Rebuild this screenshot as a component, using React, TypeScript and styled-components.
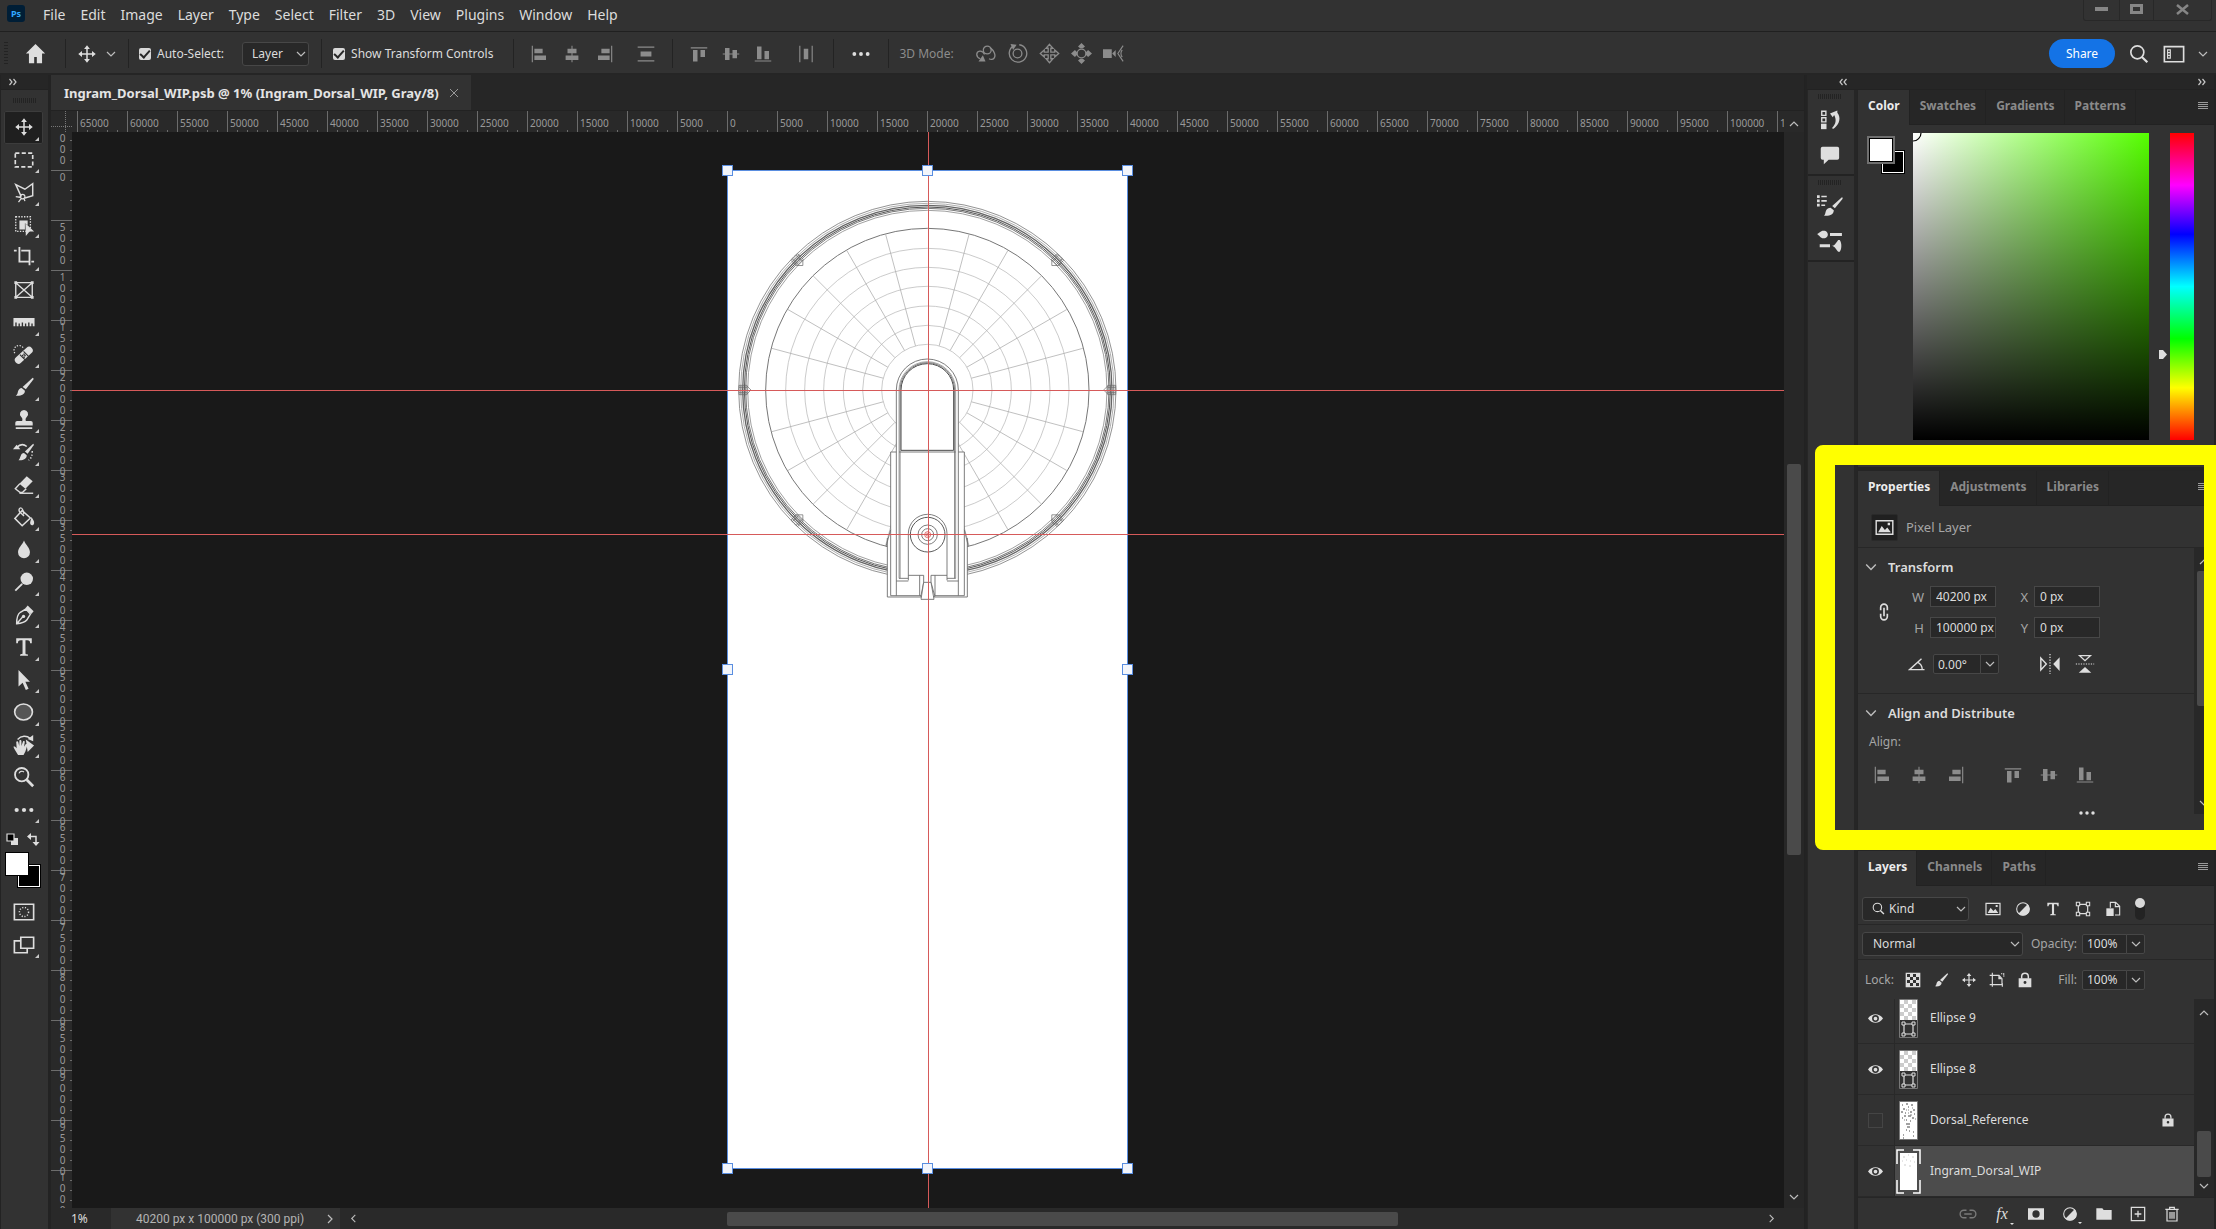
import React, { ReactNode } from "react";
import styled, { createGlobalStyle, css } from "styled-components";

const c = {
  bar: "#323232",
  dark: "#262626",
  line: "#252525",
  ruler: "#292929",
  field: "#282828",
  edge: "#474747",
  text: "#dcdcdc",
  dim: "#a6a6a6",
  off: "#8c8c8c",
  canvas: "#191919",
};

const sans = '"Noto Sans", "Open Sans", sans-serif';

const Global = createGlobalStyle`
  * { box-sizing: border-box; }
  body { margin: 0; overflow: hidden; background: ${c.dark}; color: ${c.text}; font: 13px/18px ${sans}; }
  button, input, select { font: inherit; color: inherit; margin: 0; }
  button { border: 0; padding: 0; background: none; display: flex; align-items: center; justify-content: center; }
  ul { margin: 0; padding: 0; list-style: none; }
  svg { display: block; flex: none; }
`;

/* ---------- icons ---------- */

const S = (p: { d: string; w?: number; dash?: string; fill?: string }) => (
  <path d={p.d} fill={p.fill ?? "none"} stroke="currentColor" strokeWidth={p.w ?? 1.6} strokeDasharray={p.dash} />
);
const F = (p: { d: string }) => <path d={p.d} fill="currentColor" fillRule="evenodd" />;

const art: Record<string, ReactNode> = {
  move: <><S d="M12 4v16M4 12h16" w={1.8} /><F d="M12 1.500l3.500 4.500h-7zM12 22.500l3.500-4.500h-7zM1.500 12L6 8.500v7zM22.500 12L18 8.500v7z" /></>,
  marquee: <S d="M2.500 4.500h19v15h-19z" dash="4.500 2.500" w={1.8} />,
  lasso: <><S d="M9 17L3 4l10 5 8.500-6v13L13 18.500" w={1.6} /><S d="M8 17a2.500 2.500 0 1 0 5 0a2.500 2.500 0 1 0-5 0M3 17l6 1M12 19l1 3M9 19l-3 4" w={1.4} /></>,
  object: <><S d="M3 3h16v16H3z" dash="1.500 1.500" w={1.4} /><F d="M7 7h9v5l-3-2v7H7z" /><F d="M13.500 10l9.500 9h-5l-4 5z" /></>,
  crop: <><S d="M7 1v16h10M1 5h3M9 5h9v16M20 17h3" w={2} /></>,
  frame: <><S d="M3 4h18v16H3zM3 4l18 16M21 4L3 20" w={1.5} /><F d="M1.500 2.500h3v3h-3zM19.500 2.500h3v3h-3zM1.500 18.500h3v3h-3zM19.500 18.500h3v3h-3z" /></>,
  measure: <F d="M.5 7.500h23v9h-2v-3h-1.500v3h-2v-4h-1.500v4h-2v-3H13v3h-2v-4H9.500v4h-2v-3H6v3H4v-4H2.500v4h-2z" />,
  heal: <><path d="M6 17.500L17.500 7" stroke="currentColor" strokeWidth="8" strokeLinecap="round" /><path d="M7.500 11.500l6 6M11.500 8l6 6" stroke="#323232" strokeWidth="1.200" /><path d="M10.500 12.500h.1M13 12.500h.1M12 14.500h.1M12 11h.1" stroke="#323232" strokeWidth="1.500" strokeLinecap="square" /><S d="M2 10a5 5 0 0 1 9-6" dash="1.500 1.500" w={1.3} /></>,
  brush: <><F d="M21.500 2c1 .3 1 1 .7 1.800L14 14.500 10.500 12z" /><F d="M9.500 13l3.500 3c0 4-4 6-10 5.500 2-1.500 2-3 2.500-5 .7-2 2-3.500 4-3.500z" /></>,
  stamp: <F d="M12 1a4.500 4.500 0 0 1 3 7.800c-1.500 1.400-1.500 2.700-1 4.200h5.500a2 2 0 0 1 2 2v3h-19v-3a2 2 0 0 1 2-2H10c.5-1.500.5-2.800-1-4.200A4.500 4.500 0 0 1 12 1zM3 20h18v1.800H3z" />,
  history: <><F d="M22 3c.8.3.8 1 .5 1.600L16 14l-3-2.500z" /><F d="M12 13l3 2.500c0 4-4 6-9 5.500 1.500-1.500 1.500-3 2.500-5 .7-1.800 1.500-3 3.500-3z" /><S d="M4 7c4-4 8-3.500 11-1" w={1.600} /><F d="M0 9l4-5 4 5z" /><S d="M21 11c0 5-1 8-4 10" dash="1.500 2" /></>,
  eraser: <><F d="M15 2.500l6.500 5.500-8 8L7 10.500z" /><S d="M7.500 10.500L2.500 16l5 4h3l4-4" w={1.500} /><S d="M7 21h15" w={1.500} /></>,
  bucket: <><S d="M10 5l9 8-9 8.500L2 13.500z" w={1.600} /><S d="M12 11L7 6c-1-2 0-4 1.500-4S11 4 12 9" w={1.500} /><F d="M20 12c2 3 3.500 4.500 3 7-.4 1.500-1.200 2-2.300 2S18.500 20 18.700 18c.3-2 1-3 1.300-6z" /></>,
  blur: <F d="M12 1.500c2 5 6.500 8 6.500 13a6.500 6.500 0 0 1-13 0c0-5 4.500-8 6.500-13z" />,
  dodge: <><circle cx="15" cy="8.500" r="6.800" fill="currentColor" /><S d="M10 14l-7.500 7.500" w={2} /></>,
  pen: <><S d="M4 21.500c0-6 1-10.500 4-12.500l6-3.500L19 11l-4 6.500c-2 2.500-6 3.500-11 4zM4 21.500l7-8" w={1.600} /><F d="M13.500 4.500L16 1.500l6.500 6.500-2.500 3z" /><circle cx="11.500" cy="13.500" r="1.800" fill="currentColor" /></>,
  type: <F d="M3.500 2.500h17v5.500h-1.800c-.2-2.500-.7-3.300-3.200-3.300h-1.900v14.100c0 1 .6 1.200 2.700 1.300V21.500H7.700v-1.400c2.100-.1 2.700-.3 2.700-1.300V4.700H8.500C6 4.700 5.500 5.500 5.300 8H3.500z" />,
  select: <F d="M6 1l12.500 13h-5l3.500 7.500-3 1.500-3.500-8-4.500 4z" />,
  ellipse: <ellipse cx="11.500" cy="12" rx="9.700" ry="8.700" fill="#555" stroke="currentColor" strokeWidth="1.800" />,
  hand: <><S d="M5 6c4-4.500 10-4.500 14-1" w={1.500} /><F d="M22 1v7l-6-2.500z" /><F d="M14 6l9 6.500-7 7z" /><F d="M5 22c-2-3-4-6-4.500-8 1-1 2-.5 3.500 1.500L3.500 8.500c1-1 2-.7 2.300.5l1 4L7 7c1-1 2-.5 2.200.5v5.500L11 8c1-.8 2 0 1.800 1L12 14l2-3c1-.5 2 .3 1.600 1.500L13.500 19l-2 4h-6z" /></>,
  zoom: <><circle cx="9.500" cy="9.500" r="7.300" fill="none" stroke="currentColor" strokeWidth="2" /><S d="M6.500 8a3.500 3.500 0 0 1 5.500-1.500" w={1.200} /><S d="M15 15l7 7" w={3} /></>,
  dots: <><circle cx="4" cy="12" r="2.300" fill="currentColor" /><circle cx="12" cy="12" r="2.300" fill="currentColor" /><circle cx="20" cy="12" r="2.300" fill="currentColor" /></>,
  mask: <><S d="M1.500 3.500h21v17h-21z" w={1.800} /><circle cx="12" cy="12" r="5" fill="none" stroke="currentColor" strokeWidth="1.600" strokeDasharray="1.200 1.800" /></>,
  screens: <><S d="M8.500 3.500h14v12h-14zM8.500 7.500h-7v13h14v-5" w={1.800} /></>,
  home: <F d="M12 1l11 11h-3.500v11h-6v-7h-3v7h-6V12H1z" />,
  alignL: <F d="M1 1h1.500v22H1zM4.500 5h11v6h-11zM4.500 14H20v6H4.500z" />,
  alignC: <F d="M11.300 1h1.400v4H18v6h-5.300v3h7.800v6h-7.800v3h-1.400v-3H3.500v-6h7.800v-3H6V5h5.300z" />,
  alignR: <F d="M21.500 1H23v22h-1.500zM8.500 5h11v6h-11zM4 14h15.500v6H4z" />,
  distV: <F d="M2 3h20v1.500H2zM5.500 9h13v6h-13zM2 19.500h20V21H2z" />,
  alignT: <F d="M1 3h22v1.500H1zM4 6.500h6V22H4zM14 6.500h6V16h-6z" />,
  alignM: <F d="M1 11.300h3V4h6v7.300h4V6.500h6v4.800h3v1.400h-3v4.800h-6v-4.800h-4V20H4v-7.300H1z" />,
  alignB: <F d="M1 20.500h22V22H1zM4 2h6v17H4zM14 8h6v11h-6z" />,
  distH: <F d="M3 1h1.500v22H3zM9 5h6v14H9zM19.500 1H21v22h-1.500z" />,
  orbit: <><circle cx="14" cy="8" r="4.500" fill="none" stroke="currentColor" strokeWidth="1.500" /><S d="M11 13C8 7 2 9 2 13c0 3 2 4 4 5M17 5c5 4 7 9 5 12-1 2-4 2-6 1" w={1.500} /><F d="M9 14l3 7H4z" /></>,
  roll: <><circle cx="12" cy="12" r="5" fill="none" stroke="currentColor" strokeWidth="1.500" /><S d="M8 3a10 10 0 1 0 6-1" w={1.500} /><F d="M4 1l7 1-4 6z" /></>,
  pan: <S d="M12 1.500l4 4.500h-2.500v4.500H18V8l4.500 4-4.500 4v-2.500h-4.500V18H16l-4 4.500L8 18h2.500v-4.500H6V16l-4.500-4L6 8v2.500h4.500V6H8z" w={1.500} />,
  slide: <><circle cx="12" cy="12" r="5" fill="none" stroke="currentColor" strokeWidth="1.500" /><F d="M12 0l4 4-2.500 2h-3L8 4zM12 24l4-4-2.500-2h-3L8 20zM0 12l4.500-4L7 10.500v3L4.500 16zM24 12l-4.500-4-2.500 2.500v3l2.500 2.500z" /></>,
  camera: <><F d="M0 7h10v10H0zM10.500 12l4-4v8z" /><S d="M23 3l-6 9 6 9M22 8c-2 2-2 6 0 8" w={1.300} /></>,
  search: <><circle cx="10" cy="10" r="7.800" fill="none" stroke="currentColor" strokeWidth="2" /><S d="M15.500 15.500L22 22" w={2.600} /></>,
  workspace: <><S d="M1.500 4h21v16.500h-21z" w={1.800} /><S d="M5 7.500h3v9H5zM5 10.500h3M5 13.500h3" w={1.200} /></>,
  actions: <><S d="M3 2.500h4.500V7H3zM3 9.500h4.500V14H3z" w={1.500} /><F d="M2.200 16h6v6h-6z" /><F d="M12 5l8-3.500V4c4 5 3 12-4 17.500l-2-.5c5-5 5-10 2.500-14.500L15 9z" /></>,
  comment: <F d="M4 3h17a2 2 0 0 1 2 2v11a2 2 0 0 1-2 2H11l-5.500 5V18H4a2 2 0 0 1-2-2V5a2 2 0 0 1 2-2z" />,
  brushList: <><F d="M0 2h2.500v2.500H0zM4 2.500h5V4H4zM0 6h2.500v2.500H0zM4 6.500h5V8H4zM0 10h2.500v2.500H0zM4 10.500h3.500V12H4zM23 4c1 .3.700 1 .5 1.500L16.500 14 14 12zM12.500 13.500l3 2.500c0 4-4 5.500-9 5 1.500-1.500 1-3 2-5 .8-1.700 2-2.500 4-2.500z" /></>,
  brushes: <F d="M0 5.500C2 5 3 2.500 6 2.500s4 2 4 3.500-1 3.500-4 3.500S2 6.500 0 5.500zM12 4.500h11v2.800H12zM2.500 15h9.500v2.800H2.500zM13.500 16.500c2.500 0 4-2.500 6-5.500h1.500c2 3 2 8 0 11h-1.500c-2-3-3.500-5.500-6-5.500z" />,
  picture: <><S d="M1.500 3.500h21v17h-21z" w={1.800} /><F d="M4 18l4.500-8 4 5 3-3 4.500 6zM16 6h3v3h-3z" /></>,
  link: <><S d="M8 10V6.500a4 4 0 0 1 8 0V10M8 14v3.500a4 4 0 0 0 8 0V14M12 7v10" w={2} /></>,
  chain: <S d="M10 7H6.500a5 5 0 0 0 0 10H10M14 7h3.500a5 5 0 0 1 0 10H14M7 12h10" w={1.800} />,
  angle: <S d="M22 19.500H2L18 5M12.500 9.500c4 2 6.500 5.500 6.500 10" w={1.800} />,
  flipH: <><S d="M2 5.500v13L8 12z" w={1.600} /><F d="M22.500 4.500v15L15.500 12z" /><S d="M12 1v22" dash="1.500 1.500" w={1.400} /></>,
  flipV: <><S d="M5.500 2h13L12 8z" w={1.600} /><F d="M4.500 22.500h15L12 15.500z" /><S d="M1 12h22" dash="1.500 1.500" w={1.400} /></>,
  adjust: <><circle cx="12" cy="12" r="9.500" fill="none" stroke="currentColor" strokeWidth="1.600" /><F d="M19 5a9.500 9.500 0 0 1-14 14z" /></>,
  shape: <><S d="M5 5h14v14H5z" w={1.800} /><path d="M2 2h5v5H2zM17 2h5v5h-5zM2 17h5v5H2zM17 17h5v5h-5z" fill="#323232" stroke="currentColor" strokeWidth="1.600" /></>,
  smart: <><S d="M8 10V2h8l6 6v13h-7M15.500 2v6.500H22" w={1.700} /><F d="M2 11h11v11.500H2z" /></>,
  checker: <><F d="M1 1h22v22H1zM3 3v4.500h4.500V3zM12 3v4.500h4.500V3zM7.500 7.500V12H12V7.500zM16.500 7.500V12H21V7.500zM3 12v4.500h4.500V12zM12 12v4.500h4.500V12zM7.500 16.500V21H12v-4.500zM16.500 16.500V21H21v-4.500z" /></>,
  artboard: <><S d="M5 1v21M1 5h14l4.500 5v9H1M20 17v5" w={1.700} /><F d="M14 5l6 6h-6zM21 2h2v2h-2zM18 2h2v1.500h-2zM21.500 5h1.500v2h-1.500z" /></>,
  lock: <><F d="M2.500 9.500h19V23h-19zM12 13.500a2 2 0 1 0 0 4.400 2 2 0 0 0 0-4.400z" /><S d="M7 10V7a5 5 0 0 1 10 0v3" w={2.200} /></>,
  eye: <F d="M0 12C6 3 18 3 24 12 18 21 6 21 0 12zM12 6.500a5.500 5.500 0 1 0 0 11 5.500 5.500 0 0 0 0-11zM12 9a3 3 0 1 1 0 6 3 3 0 0 1 0-6z" />,
  maskAdd: <F d="M0 3.500h24v17H0zM12 6.500a5.500 5.500 0 1 0 0 11 5.500 5.500 0 0 0 0-11z" />,
  folder: <F d="M.5 3.500h9l2 2.500h12v14.500H.5z" />,
  add: <S d="M2 2h20v20H2zM12 7v10M7 12h10" w={1.900} />,
  trash: <><S d="M2 5h20M8.500 5V2h7v3M4.500 5v17.500h15V5M9 9v10M12 9v10M15 9v10" w={1.800} /></>,
};

const Icon = ({ n, s = 18 }: { n: string; s?: number }) => (
  <svg width={s} height={s} viewBox="0 0 24 24" aria-hidden="true">{art[n]}</svg>
);

const Chevron = ({ dir = "down", w = 10, color = "#bdbdbd" }: { dir?: string; w?: number; color?: string }) => {
  const turn = { down: 0, up: 180, left: 90, right: 270 }[dir];
  return (
    <svg width={w} height={w} viewBox="0 0 10 10" aria-hidden="true">
      <path d="M1 3l4 4 4-4" transform={`rotate(${turn} 5 5)`} fill="none" stroke={color} strokeWidth="1.2" />
    </svg>
  );
};

const DoubleChevron = ({ flip }: { flip?: boolean }) => (
  <svg width="8" height="8" viewBox="0 0 8 8" aria-hidden="true">
    <path d={flip ? "M3.500 1L1 4l2.500 3M7.500 1L5 4l2.500 3" : "M.5 1L3 4 .5 7M4.500 1L7 4 4.500 7"} fill="none" stroke="#c8c8c8" strokeWidth="1.2" />
  </svg>
);

/* ---------- frame ---------- */

const Shell = styled.div`
  display: flex;
  flex-direction: column;
  height: 100vh;
  overflow: hidden;
`;

const MenuBar = styled.header`
  display: flex;
  align-items: flex-start;
  height: 32px;
  padding-left: 7px;
  background: ${c.bar};
  border-bottom: 1px solid #202020;
`;

const Logo = styled.span`
  display: flex;
  align-items: center;
  justify-content: center;
  width: 18px;
  height: 17px;
  margin-top: 5px;
  border-radius: 3px;
  background: #001e36;
  color: #31a8ff;
  font-size: 9px;
  font-weight: 700;
`;

const Menu = styled.nav`
  display: flex;
  gap: 15px;
  padding: 4px 0 0 18px;
  flex: 1;
  button { height: 22px; font-size: 14px; }
`;

const WindowButtons = styled.div`
  display: flex;
  height: 21px;
  margin-right: 4px;
  border: 1px solid #282828;
  border-top: 0;
  border-radius: 0 0 3px 3px;
  color: #868686;
`;

const WindowButton = styled.button<{ $w: number }>`
  width: ${(p) => p.$w}px;
  padding-bottom: 2px;
  & + & { border-left: 1px solid #282828; }
`;

const OptionsBar = styled.div`
  display: flex;
  align-items: center;
  height: 43px;
  padding: 2px 8px 0 4px;
  background: ${c.bar};
  border-bottom: 2px solid #252525;
`;

const Grip = styled.span<{ $tall?: boolean }>`
  ${(p) => p.$tall
    ? css`width: 4px; height: 24px; background: repeating-linear-gradient(#232323 0 1px, transparent 1px 3px);`
    : css`width: 24px; height: 5px; background: repeating-linear-gradient(90deg, #232323 0 1px, transparent 1px 2px);`}
`;

const Group = styled.div<{ $gap?: number; $pad?: string; $line?: boolean }>`
  display: flex;
  align-items: center;
  height: 29px;
  gap: ${(p) => p.$gap ?? 0}px;
  padding: ${(p) => p.$pad ?? "0"};
  border-right: ${(p) => (p.$line === false ? 0 : 1)}px solid #232323;
`;

const IconButton = styled.button<{ $w?: number; $off?: boolean }>`
  width: ${(p) => p.$w ?? 32}px;
  height: 24px;
  color: ${(p) => (p.$off ? c.off : "#dedede")};
`;

const Check = styled.label`
  display: flex;
  align-items: center;
  gap: 6px;
  font-size: 12px;
  white-space: nowrap;
  input {
    appearance: none;
    width: 12px;
    height: 12px;
    border-radius: 2px;
    background: #d8d8d8;
    display: grid;
    place-items: center;
  }
  input:checked::after {
    content: "";
    width: 4px;
    height: 8px;
    margin-bottom: 2px;
    border: solid #262626;
    border-width: 0 2px 2px 0;
    transform: rotate(42deg);
  }
`;

const Picker = styled.span<{ $w: number; $h?: number; $pad?: number }>`
  position: relative;
  display: inline-flex;
  align-items: center;
  width: ${(p) => p.$w}px;
  height: ${(p) => p.$h ?? 24}px;
  select {
    appearance: none;
    width: 100%;
    height: 100%;
    padding: 0 18px 0 ${(p) => p.$pad ?? 9}px;
    border: 1px solid ${c.edge};
    border-radius: 3px;
    background: ${c.field};
    font-size: 12px;
  }
  & > svg:last-child { position: absolute; right: 3px; pointer-events: none; }
  & > svg:first-child { position: absolute; left: 10px; pointer-events: none; }
`;

const Hint = styled.span`
  color: ${c.off};
  font-size: 12px;
  white-space: nowrap;
`;

const Spacer = styled.span`
  flex: 1;
`;

const Share = styled.button`
  width: 66px;
  height: 29px;
  margin-right: 12px;
  border-radius: 15px;
  background: #1473e6;
  color: #fff;
  font-size: 12px;
`;

const Body = styled.div`
  display: flex;
  flex: 1;
  min-height: 0;
`;

/* ---------- tools ---------- */

const ToolColumn = styled.aside`
  display: flex;
  flex-direction: column;
  width: 51px;
  border-right: 3px solid #232323;
  border-left: 1px solid #232323;
  background: ${c.bar};
`;

const Strip = styled.div<{ $end?: boolean }>`
  display: flex;
  align-items: center;
  justify-content: ${(p) => (p.$end ? "space-between" : "flex-start")};
  height: 15px;
  padding: ${(p) => (p.$end ? "0 8px 0 32px" : "0 8px")};
  background: ${c.dark};
  border-bottom: 1px solid #222;
`;

const GripRow = styled.div<{ $h?: number }>`
  display: flex;
  align-items: center;
  justify-content: center;
  height: ${(p) => p.$h ?? 21}px;
`;

const ToolList = styled.div`
  display: flex;
  flex-direction: column;
  height: 715px;
  padding: 0 3px;
`;

const Tool = styled.button<{ $on?: boolean; $more?: boolean }>`
  position: relative;
  flex: 1;
  width: 39px;
  color: #dedede;
  ${(p) => p.$on && css`background: #1f1f1f; box-shadow: inset 0 0 0 1px #3c3c3c; border-radius: 2px;`}
  ${(p) => p.$more && css`&::after {
    content: "";
    position: absolute;
    right: 4px;
    bottom: 3px;
    border: 2px solid transparent;
    border-right-color: #c8c8c8;
    border-bottom-color: #c8c8c8;
  }`}
`;

const SwapRow = styled.div`
  display: flex;
  justify-content: space-between;
  padding: 7px 8px 0 5px;
  height: 26px;
`;

const Swatches = styled.div<{ $framed?: boolean }>`
  display: grid;
  grid-template-columns: 12px 12px 12px;
  grid-template-rows: 12px 12px 12px;
  margin: ${(p) => (p.$framed ? 5 : 0)}px 0 0 4px;
  span { border: 1px solid #000; }
  span:first-child { grid-area: 2 / 2 / 4 / 4; background: #000; box-shadow: inset 0 0 0 1px #fff; }
  span:last-child {
    grid-area: 1 / 1 / 3 / 3;
    z-index: 1;
    background: #fff;
    ${(p) => p.$framed && css`box-shadow: 0 0 0 2px #707070;`}
  }
`;

const ModeList = styled.div`
  display: flex;
  flex-direction: column;
  height: 65px;
  padding: 0 3px;
  margin-top: 8px;
`;

const toolNames: [string, boolean][] = [
  ["move", true], ["marquee", true], ["lasso", true], ["object", true], ["crop", true], ["frame", false],
  ["measure", true], ["heal", true], ["brush", true], ["stamp", true], ["history", true], ["eraser", true],
  ["bucket", true], ["blur", true], ["dodge", true], ["pen", true], ["type", true], ["select", true],
  ["ellipse", true], ["hand", true], ["zoom", false], ["dots", true],
];

const Tools = () => (
  <ToolColumn>
    <Strip><DoubleChevron /></Strip>
    <GripRow><Grip /></GripRow>
    <ToolList>
      {toolNames.map(([n, more], i) => (
        <Tool key={n} $on={i === 0} $more={more} aria-label={n}><Icon n={n} s={i === 0 ? 20 : 22} /></Tool>
      ))}
    </ToolList>
    <SwapRow>
      <svg width="13" height="13" viewBox="0 0 13 13"><path d="M5 5h7v7H5z" fill="#dedede" /><path d="M1 1h7v7H1z" fill="#000" stroke="#dedede" strokeWidth="1.2" /></svg>
      <svg width="13" height="13" viewBox="0 0 13 13"><path d="M3 3.500h6V10" fill="none" stroke="#dedede" strokeWidth="1.500" /><path d="M0 3.500L4 0v7zM9 13L5.500 9h7z" fill="#dedede" /></svg>
    </SwapRow>
    <Swatches><span /><span /></Swatches>
    <ModeList>
      <Tool aria-label="Quick mask"><Icon n="mask" s={22} /></Tool>
      <Tool $more aria-label="Screen mode"><Icon n="screens" s={22} /></Tool>
    </ModeList>
  </ToolColumn>
);

/* ---------- document ---------- */

const Document = styled.main`
  display: flex;
  flex-direction: column;
  flex: 1;
  min-width: 0;
  background: ${c.ruler};
  border-right: 1px solid #222;
`;

const TabStrip = styled.div`
  display: flex;
  height: 36px;
  background: ${c.dark};
  border-bottom: 1px solid #222;
`;

const DocTab = styled.div`
  display: flex;
  align-items: center;
  gap: 10px;
  padding: 0 12px 0 13px;
  background: ${c.bar};
  font-weight: 700;
  font-size: 13px;
  color: #e4e4e4;
  white-space: nowrap;
`;

const RulerRow = styled.div`
  display: flex;
  height: 21px;
`;

const Corner = styled.span`
  flex: none;
  width: 21px;
  background:
    repeating-linear-gradient(90deg, #777 0 1px, transparent 1px 2px) 0 15px / 21px 1px no-repeat,
    repeating-linear-gradient(#777 0 1px, transparent 1px 2px) 14px 0 / 1px 21px no-repeat;
`;

const HRuler = styled.div`
  display: flex;
  flex: 1;
  overflow: hidden;
  padding-left: 5px;
  background: repeating-linear-gradient(90deg, #6c6c6c 0 1px, transparent 1px 10px) 5px 19px / 100% 2px no-repeat;
  span {
    flex: none;
    width: 50px;
    padding: 4px 0 0 2px;
    border-left: 1px solid #6c6c6c;
    font-size: 10px;
    line-height: 16px;
    color: #999;
  }
`;

const RulerEnd = styled.span`
  display: flex;
  align-items: center;
  justify-content: center;
  width: 20px;
  padding-top: 5px;
`;

const Stage = styled.div`
  display: flex;
  flex: 1;
  min-height: 0;
`;

const VRuler = styled.div`
  flex: none;
  width: 21px;
  overflow: hidden;
  background: repeating-linear-gradient(#6c6c6c 0 1px, transparent 1px 10px) 19px 8px / 2px 100% no-repeat;
  span {
    display: block;
    height: 50px;
    padding: 1px 6px 0 8px;
    border-top: 1px solid #6c6c6c;
    font-size: 10px;
    line-height: 11px;
    color: #999;
    word-break: break-all;
    text-align: center;
    width: 21px;
  }
  span:first-child { margin-top: -12px; }
`;

const Canvas = styled.div`
  position: relative;
  flex: 1;
  overflow: hidden;
  background: ${c.canvas};
`;

const Artboard = styled.div`
  position: absolute;
  left: 655px;
  top: 38px;
  width: 401px;
  height: 999px;
  background: #fff;
  border: 1px solid #5a8ee0;
`;

const Guide = styled.i<{ $at: number; $v?: boolean }>`
  position: absolute;
  background: #d65a5a;
  ${(p) => p.$v
    ? css`left: ${p.$at}px; top: 0; bottom: 0; width: 1px;`
    : css`top: ${p.$at}px; left: 0; right: 0; height: 1px;`}
`;

const Handle = styled.i<{ $x: number; $y: number }>`
  position: absolute;
  left: ${(p) => p.$x - 5}px;
  top: ${(p) => p.$y - 5}px;
  width: 11px;
  height: 11px;
  background: #f2f5fb;
  border: 1px solid #5a8ee0;
`;

const VScroll = styled.div`
  display: flex;
  flex-direction: column;
  align-items: center;
  width: 20px;
  padding: 332px 0 6px;
  background: #272727;
`;

const Thumb = styled.span<{ $size: number; $thick?: number; $row?: boolean }>`
  ${(p) => p.$row
    ? css`width: ${p.$size}px; height: ${p.$thick ?? 14}px;`
    : css`height: ${p.$size}px; width: ${p.$thick ?? 14}px;`}
  flex: none;
  border-radius: 2px;
  background: #4a4a4a;
`;

const Status = styled.footer`
  display: flex;
  align-items: center;
  height: 21px;
  background: ${c.ruler};
  font-size: 12px;
`;

const Zoom = styled.span`
  width: 60px;
  padding-left: 20px;
`;

const Info = styled.div`
  display: flex;
  align-items: center;
  justify-content: space-between;
  width: 229px;
  height: 21px;
  padding: 0 5px 0 25px;
  background: ${c.bar};
  color: #b4b4b4;
  font-family: Roboto, ${sans};
`;

const HScroll = styled.div`
  display: flex;
  align-items: center;
  flex: 1;
  padding: 0 28px 0 9px;
`;

const ScrollGap = styled.span`
  width: 369px;
`;

const spokes = Array.from({ length: 24 }, (_, i) => i * 15).filter((a) => a % 90 !== 0);
const CX = 623;
const CY = 721;

const Clip = ({ x, y, turn }: { x: number; y: number; turn: number }) => (
  <g transform={`translate(${x} ${y}) rotate(${turn})`} fill="none" stroke="#666" strokeWidth="2">
    <path d="M-14 -14h24v28h-24zM-14 -8h24M-14 8h24M-8 -14v28M2 -14v28M10 -12l12 12-12 12" />
  </g>
);

const Drawing = () => (
  <svg width="399" height="997" viewBox="25 64 1197 2991" aria-hidden="true">
    <g fill="none" stroke="#8d8d8d" strokeWidth="2.400">
      <circle cx={CX} cy={CY} r="566" stroke="#777" />
      <circle cx={CX} cy={CY} r="560" stroke="#999" />
      <circle cx={CX} cy={CY} r="554" stroke="#666" strokeWidth="4" />
      <circle cx={CX} cy={CY} r="549" stroke="#555" strokeWidth="3" />
      <circle cx={CX} cy={CY} r="545" stroke="#777" strokeWidth="3" />
      <circle cx={CX} cy={CY} r="539" stroke="#888" />
      <circle cx={CX} cy={CY} r="485" stroke="#777" strokeWidth="3" />
      {[425, 368, 311, 252, 194, 137].map((r) => (
        <circle key={r} cx={CX} cy={CY} r={r} stroke="#b0b0b0" strokeWidth="2" />
      ))}
      {spokes.map((a) => (
        <path key={a} d={`M${CX} ${CY - 137}V${CY - 483}`} transform={`rotate(${a} ${CX} ${CY})`} stroke="#a8a8a8" strokeWidth="2" />
      ))}
    </g>
    <Clip x={72} y={721} turn={0} />
    <Clip x={1174} y={721} turn={180} />
    <Clip x={234} y={332} turn={45} />
    <Clip x={1012} y={332} turn={135} />
    <Clip x={234} y={1111} turn={-45} />
    <Clip x={1012} y={1111} turn={225} />
    <g fill="#fff" stroke="#6a6a6a" strokeWidth="2.600">
      <path d="M513 907H734V1140L746 1190H743V1342H503V1190H499L513 1140Z" />
      <path d="M530 1338V721a93 93 0 0 1 186 0V1338" />
      <path d="M538 1286V721a85 85 0 0 1 170 0V1286" stroke="#999" />
      <path d="M541 1286V721a82 82 0 0 1 164 0V1286" />
      <path d="M544 902V721a79 79 0 0 1 158 0V902Z" stroke="#4a4a4a" strokeWidth="3" />
      <path d="M538 907H708" />
      <path d="M513 1140V1338M734 1140V1338M503 1165V1190M743 1165V1190M513 1338H604M645 1338H734" fill="none" />
      <path d="M566 1292V1152a58 58 0 0 1 116 0V1292M530 1294H566M682 1294H716M538 1286H566M682 1286H708" fill="none" />
      <path d="M566 1277H612V1298L604 1338V1342M682 1277H634V1298L645 1338V1342M600 1277V1338M646 1277V1338" fill="none" />
      <path d="M612 1298H634L643 1349H604Z" />
      <circle cx="624" cy="1155" r="52" stroke="#5a5a5a" strokeWidth="3" />
      <circle cx="624" cy="1155" r="29" />
      <circle cx="624" cy="1155" r="18" />
      <circle cx="624" cy="1155" r="9" stroke="#d65a5a" />
      <circle cx="624" cy="1155" r="4" stroke="#d65a5a" />
    </g>
  </svg>
);

const hMarks = Array.from({ length: 35 }, (_, i) => Math.abs(i * 5000 - 65000));
const vMarks = Array.from({ length: 22 }, (_, i) => Math.abs(i * 5000 - 5000));
const handles: [number, number][] = [
  [655, 38], [855, 38], [1055, 38], [655, 537], [1055, 537], [655, 1036], [855, 1036], [1055, 1036],
];

const Editor = () => (
  <Document>
    <TabStrip>
      <DocTab>
        Ingram_Dorsal_WIP.psb @ 1% (Ingram_Dorsal_WIP, Gray/8)
        <button aria-label="Close document">
          <svg width="10" height="10" viewBox="0 0 10 10"><path d="M1 1l8 8M9 1L1 9" stroke="#999" strokeWidth="1" /></svg>
        </button>
      </DocTab>
    </TabStrip>
    <RulerRow>
      <Corner />
      <HRuler>{hMarks.map((m, i) => <span key={i}>{m}</span>)}</HRuler>
      <RulerEnd><Chevron dir="up" /></RulerEnd>
    </RulerRow>
    <Stage>
      <VRuler>{vMarks.map((m, i) => <span key={i}>{m}</span>)}</VRuler>
      <Canvas>
        <Artboard><Drawing /></Artboard>
        <Guide $at={258} />
        <Guide $at={402} />
        <Guide $at={856} $v />
        {handles.map(([x, y]) => <Handle key={`${x}-${y}`} $x={x} $y={y} />)}
      </Canvas>
      <VScroll>
        <Thumb $size={391} />
        <Spacer />
        <Chevron />
      </VScroll>
    </Stage>
    <Status>
      <Zoom>1%</Zoom>
      <Info>40200 px x 100000 px (300 ppi)<Chevron dir="right" /></Info>
      <HScroll>
        <Chevron dir="left" w={9} />
        <ScrollGap />
        <Thumb $size={671} $row />
        <Spacer />
        <Chevron dir="right" w={9} />
      </HScroll>
    </Status>
  </Document>
);

/* ---------- dock ---------- */

const Dock = styled.aside`
  display: flex;
  flex-direction: column;
  flex: none;
  width: 411px;
  padding: 0 2px 0 2px;
  background: #232323;
`;

const DockBody = styled.div`
  display: flex;
  flex: 1;
  min-height: 0;
`;

const IconDock = styled.div`
  width: 50px;
  border-right: 3px solid #262626;
  border-left: 1px solid #262626;
  background: ${c.bar};
`;

const IconDockGroup = styled.div`
  display: flex;
  flex-direction: column;
  align-items: center;
  height: 86px;
  padding-right: 3px;
  border-bottom: 2px solid #232323;
  button { height: 35px; width: 40px; color: #dedede; }
`;

const Panels = styled.div`
  display: flex;
  flex-direction: column;
  flex: 1;
  min-width: 0;
`;

const Panel = styled.section<{ $h?: number }>`
  position: relative;
  display: flex;
  flex-direction: column;
  ${(p) => (p.$h ? css`height: ${p.$h}px; flex: none;` : css`flex: 1; min-height: 0;`)}
  background: ${c.bar};
  border-bottom: 4px solid #252525;
  border-left: 1px solid #252525;
  &:last-child { border-bottom: 0; }
`;

const Tabs = styled.div`
  display: flex;
  height: 35px;
  flex: none;
  background: ${c.dark};
`;

const Tab = styled.button<{ $on?: boolean }>`
  padding: 0 9px 3px 10px;
  font-size: 12px;
  font-weight: 700;
  color: ${(p) => (p.$on ? "#ececec" : "#8a8a8a")};
  background: ${(p) => (p.$on ? c.bar : "transparent")};
  border-right: 1px solid #222;
  border-bottom: ${(p) => (p.$on ? 0 : 1)}px solid #222;
`;

const TabFill = styled.span`
  display: flex;
  align-items: center;
  justify-content: flex-end;
  flex: 1;
  padding: 0 6px 2px 0;
  border-bottom: 1px solid #222;
`;

const PanelTabs = ({ names }: { names: string[] }) => (
  <Tabs>
    {names.map((n, i) => <Tab key={n} $on={i === 0}>{n}</Tab>)}
    <TabFill>
      <svg width="10" height="8" viewBox="0 0 10 8" aria-hidden="true"><path d="M0 .5h10M0 2.500h10M0 4.500h10M0 6.500h10" stroke="#9a9a9a" /></svg>
    </TabFill>
  </Tabs>
);

const ColorBody = styled.div`
  display: flex;
  align-items: flex-start;
  padding: 8px 20px 0 7px;
`;

const ColorField = styled.div`
  flex: 1;
  height: 307px;
  margin-left: 8px;
  overflow: hidden;
  background: linear-gradient(to top, #000, transparent), linear-gradient(to right, #fff, #55ff00);
`;

const HueSlider = styled.div`
  position: relative;
  width: 24px;
  height: 307px;
  margin-left: 21px;
  background: linear-gradient(#f00, #f0f 17%, #00f 33%, #0ff 50%, #0f0 67%, #ff0 83%, #f00);
  input { width: 24px; height: 307px; opacity: 0; writing-mode: vertical-lr; direction: rtl; }
  svg { position: absolute; left: -11px; top: 217px; }
`;

const LayerKind = styled.div`
  display: flex;
  align-items: center;
  gap: 8px;
  height: 42px;
  padding: 1px 0 0 13px;
  border-bottom: 1px solid #272727;
  color: ${c.dim};
`;

const KindBox = styled.span`
  display: grid;
  place-items: center;
  width: 27px;
  height: 27px;
  border: 1px solid #2a2a2a;
  border-radius: 2px;
  background: #202020;
  color: #dedede;
`;

const Scroller = styled.div`
  display: flex;
  flex: 1;
  min-height: 0;
`;

const ScrollContent = styled.div`
  flex: 1;
  min-width: 0;
`;

const Track = styled.div<{ $top?: number; $end?: number; $gap?: number }>`
  display: flex;
  flex-direction: column;
  align-items: center;
  width: 20px;
  margin-bottom: ${(p) => p.$end ?? 0}px;
  padding: 9px 0 6px;
  background: #282828;
  ${Thumb} { margin: ${(p) => p.$top ?? 0}px 0 ${(p) => p.$gap ?? 0}px; }
`;

const Section = styled.section<{ $h: number }>`
  height: ${(p) => p.$h}px;
  border-bottom: 1px solid #272727;
`;

const SectionTitle = styled.h3`
  display: flex;
  align-items: center;
  gap: 11px;
  height: 37px;
  margin: 0;
  padding-left: 7px;
  font-size: 13px;
  font-weight: 600;
`;

const FieldGrid = styled.div`
  display: grid;
  grid-template-columns: 50px 21px 66px 38px 66px;
  grid-template-rows: 21px 21px;
  gap: 10px 0;
  align-items: center;
  padding: 1px 0 0 1px;
  label { color: ${c.dim}; text-align: right; padding-right: 6px; margin-left: -20px; }
`;

const LinkCell = styled.button`
  grid-row: 1 / 3;
  color: #dedede;
`;

const Field = styled.input<{ $w?: number; $joined?: boolean }>`
  width: ${(p) => (p.$w ? `${p.$w}px` : "100%")};
  height: ${(p) => (p.$joined ? 20 : 21)}px;
  padding: 0 0 0 ${(p) => (p.$joined ? 4 : 5)}px;
  border: 1px solid ${c.edge};
  border-radius: ${(p) => (p.$joined ? "2px 0 0 2px" : "0")};
  background: ${c.field};
  font-size: 12px;
`;

const DropButton = styled.button`
  width: 19px;
  height: 20px;
  margin-left: -1px;
  border: 1px solid ${c.edge};
  border-radius: 0 2px 2px 0;
  background: ${c.field};
`;

const AngleRow = styled.div`
  display: flex;
  align-items: center;
  padding: 15px 0 0 43px;
`;

const AngleMark = styled.span`
  display: flex;
  justify-content: center;
  width: 32px;
  color: #dedede;
`;

const Sub = styled.p`
  margin: 0;
  padding: 0 0 0 11px;
  line-height: 22px;
  font-size: 12px;
  color: ${c.dim};
`;

const AlignRow = styled.div`
  display: flex;
  padding: 10px 0 0 7px;
  button { width: 36px; }
  button:nth-child(4) { margin-left: 22px; }
`;

const MoreRow = styled.div`
  display: flex;
  padding: 14px 0 0 213px;
`;

const Highlight = styled.div`
  position: absolute;
  z-index: 5;
  left: -43px;
  right: -10px;
  top: -26px;
  height: 405px;
  border: 20px solid #ff0;
  border-radius: 8px;
  pointer-events: none;
`;

const ControlRow = styled.div<{ $h: number; $line?: boolean; $drop?: number }>`
  display: flex;
  align-items: center;
  flex: none;
  height: ${(p) => p.$h}px;
  padding: ${(p) => p.$drop ?? 0}px 69px 0 4px;
  border-bottom: ${(p) => (p.$line ? 1 : 0)}px solid #272727;
  label { color: ${c.dim}; font-size: 12px; margin: 0 5px 0 auto; }
`;

const RowLabel = styled.span`
  padding-left: 3px;
  color: ${c.dim};
  font-size: 12px;
`;

const IconSet = styled.div<{ $gap: number; $left: number }>`
  display: flex;
  align-items: center;
  gap: ${(p) => p.$gap}px;
  margin-left: ${(p) => p.$left}px;
  color: #dedede;
`;

const Toggle = styled.input`
  appearance: none;
  width: 10px;
  height: 22px;
  border-radius: 5px;
  background: #232323;
  &::before { content: ""; display: block; width: 10px; height: 10px; border-radius: 5px; background: #d8d8d8; }
`;

const LayerList = styled.ul`
  flex: 1;
  min-width: 0;
  overflow: hidden;
  display: flex;
  flex-direction: column;
  justify-content: flex-end;
`;

const LayerItem = styled.li<{ $on?: boolean }>`
  display: flex;
  align-items: center;
  flex: none;
  height: 51px;
  border-bottom: 1px solid #292929;
  background: ${(p) => (p.$on ? "#4c4c4c" : c.bar)};
`;

const EyeCell = styled.button`
  width: 37px;
  height: 50px;
  padding-right: 1px;
  background: ${c.bar};
  border-right: 1px solid #292929;
  color: #dedede;
`;

const EyeOff = styled.span`
  width: 15px;
  height: 15px;
  border: 1px solid #454545;
`;

const ThumbCell = styled.span`
  display: grid;
  place-items: center;
  width: 27px;
`;

const LayerName = styled.span`
  flex: 1;
  padding-left: 8px;
  font-size: 12px;
`;

const LockMark = styled.span`
  padding-right: 19px;
`;

const FootBar = styled.div`
  display: flex;
  align-items: center;
  justify-content: flex-end;
  flex: none;
  height: 32px;
  padding-right: 25px;
  border-top: 1px solid #262626;
  color: #dedede;
`;

const FootButton = styled.button<{ $off?: boolean }>`
  position: relative;
  width: 34px;
  ${(p) => p.$off && css`color: #7a7a7a;`}
`;

const MoreMark = styled.i`
  position: absolute;
  right: 5px;
  bottom: -4px;
  border: 2px solid transparent;
  border-top-color: #dedede;
`;

const Fx = styled.em`
  font: italic 16px/18px "Liberation Serif", serif;
`;

const ShapeThumb = () => (
  <svg width="19" height="39" viewBox="0 0 19 39" aria-hidden="true">
    <path d="M.5.500h18v38H.5z" fill="#323232" stroke="#777" />
    <path d="M1 1h17v20H1z" fill="#fff" />
    {Array.from({ length: 20 }, (_, i) => {
      const col = i % 4;
      const row = Math.floor(i / 4);
      return (col + row) % 2 ? <path key={i} d={`M${1 + col * 4} ${1 + row * 4}h4v4h-4z`} fill="#ccc" /> : null;
    })}
    <path d="M5 25h9v10H5z" fill="none" stroke="#dedede" strokeWidth="1.200" />
    <path d="M3 23h3v3H3zM13 23h3v3h-3zM3 34h3v3H3zM13 34h3v3h-3z" fill="#323232" stroke="#dedede" />
  </svg>
);

const SketchThumb = () => (
  <svg width="19" height="39" viewBox="0 0 19 39" aria-hidden="true">
    <path d="M.5.500h18v38H.5z" fill="#fff" stroke="#777" />
    <path d="M3 4h1M7 3h2M12 4h2M4 8h2M9 6h1M14 9h2M2 11h2M6 12h1M11 11h2M15 13h1M5 15h2M9 15h3M3 17h1M13 17h2M7 19h1M11 20h1M7 23h4M8 26h3M7 29h1M10 30h1M4 34h1M14 35h1M4 37h1M14 31h1" stroke="#444" />
    <path d="M9 9h1M9 12h1M5 19h1M13 7h1M7 9h1M11 14h2M16 18h1" stroke="#888" />
  </svg>
);

const PageThumb = () => (
  <svg width="25" height="45" viewBox="0 0 25 45" aria-hidden="true">
    <path d="M4 4h17v37H4z" fill="#fff" />
    <path d="M7 8h2M12 6h1M16 8h2M6 12h1M10 11h1M14 12h1M18 13h1M8 16h2M13 17h2" stroke="#ccc" />
    <path d="M1 15V1h7M17 1h7v14M1 31v13h7M17 44h7V31" fill="none" stroke="#fff" strokeWidth="1.500" />
  </svg>
);

const layers = [
  { name: "Ellipse 9", view: true, thumb: <ShapeThumb /> },
  { name: "Ellipse 8", view: true, thumb: <ShapeThumb /> },
  { name: "Dorsal_Reference", view: false, thumb: <SketchThumb />, locked: true },
  { name: "Ingram_Dorsal_WIP", view: true, thumb: <PageThumb />, on: true },
];

const ColorPanel = () => (
  <Panel $h={381}>
    <PanelTabs names={["Color", "Swatches", "Gradients", "Patterns"]} />
    <ColorBody>
      <Swatches $framed><span /><span /></Swatches>
      <ColorField>
        <svg width="10" height="10" viewBox="0 0 10 10"><circle cx="0" cy="0" r="8" fill="none" stroke="#000" strokeWidth="1.200" /></svg>
      </ColorField>
      <HueSlider>
        <input type="range" min="0" max="360" defaultValue="100" aria-label="Hue" />
        <svg width="8" height="9" viewBox="0 0 8 9"><path d="M0 0h4l4 4.500L4 9H0z" fill="#dedede" /></svg>
      </HueSlider>
    </ColorBody>
  </Panel>
);

const PropertiesPanel = () => (
  <Panel $h={380}>
    <PanelTabs names={["Properties", "Adjustments", "Libraries"]} />
    <LayerKind><KindBox><Icon n="picture" s={19} /></KindBox>Pixel Layer</LayerKind>
    <Scroller>
      <ScrollContent>
        <Section $h={146}>
          <SectionTitle><Chevron w={12} />Transform</SectionTitle>
          <FieldGrid>
            <LinkCell aria-label="Link width and height"><Icon n="link" s={20} /></LinkCell>
            <label htmlFor="w">W</label><Field id="w" defaultValue="40200 px" />
            <label htmlFor="x">X</label><Field id="x" defaultValue="0 px" />
            <label htmlFor="h">H</label><Field id="h" defaultValue="100000 px" />
            <label htmlFor="y">Y</label><Field id="y" defaultValue="0 px" />
          </FieldGrid>
          <AngleRow>
            <AngleMark><Icon n="angle" s={18} /></AngleMark>
            <Field $w={48} $joined aria-label="Angle" defaultValue="0.00°" />
            <DropButton aria-label="Angle presets"><Chevron /></DropButton>
            <IconSet $gap={14} $left={40}>
              <button aria-label="Flip horizontal"><Icon n="flipH" s={22} /></button>
              <button aria-label="Flip vertical"><Icon n="flipV" s={20} /></button>
            </IconSet>
          </AngleRow>
        </Section>
        <SectionTitle><Chevron w={12} />Align and Distribute</SectionTitle>
        <Sub>Align:</Sub>
        <AlignRow>
          {["alignL", "alignC", "alignR", "alignT", "alignM", "alignB"].map((n) => (
            <IconButton key={n} $off aria-label={n}><Icon n={n} s={18} /></IconButton>
          ))}
        </AlignRow>
        <MoreRow><IconButton aria-label="More options"><Icon n="dots" s={18} /></IconButton></MoreRow>
      </ScrollContent>
      <Track $top={4} $end={33}><Chevron dir="up" /><Thumb $size={135} /><Spacer /><Chevron /></Track>
    </Scroller>
    <Highlight />
  </Panel>
);

const LayersPanel = () => (
  <Panel>
    <PanelTabs names={["Layers", "Channels", "Paths"]} />
    <ControlRow $h={39} $drop={7} $line>
      <Picker $w={109} $pad={26}>
        <Icon n="search" s={13} />
        <select aria-label="Filter by"><option>Kind</option></select>
        <Chevron />
      </Picker>
      <IconSet $gap={14} $left={16}>
        {["picture", "adjust", "type", "shape", "smart"].map((n) => (
          <button key={n} aria-label={n}><Icon n={n} s={16} /></button>
        ))}
        <Toggle type="checkbox" aria-label="Layer filtering" />
      </IconSet>
    </ControlRow>
    <ControlRow $h={35} $drop={3} $line>
      <Picker $w={161} $pad={10}>
        <select aria-label="Blend mode"><option>Normal</option></select>
        <Chevron />
      </Picker>
      <label htmlFor="opacity">Opacity:</label>
      <Field id="opacity" $w={45} $joined defaultValue="100%" />
      <DropButton aria-label="Opacity slider"><Chevron /></DropButton>
    </ControlRow>
    <ControlRow $h={39}>
      <RowLabel>Lock:</RowLabel>
      <IconSet $gap={12} $left={11}>
        {["checker", "brush", "move", "artboard", "lock"].map((n) => (
          <button key={n} aria-label={`Lock ${n}`}><Icon n={n} s={16} /></button>
        ))}
      </IconSet>
      <label htmlFor="fill">Fill:</label>
      <Field id="fill" $w={45} $joined defaultValue="100%" />
      <DropButton aria-label="Fill slider"><Chevron /></DropButton>
    </ControlRow>
    <Scroller>
      <LayerList>
        {layers.map((l) => (
          <LayerItem key={l.name} $on={l.on}>
            <EyeCell aria-label={`Show ${l.name}`}>{l.view ? <Icon n="eye" s={15} /> : <EyeOff />}</EyeCell>
            <ThumbCell>{l.thumb}</ThumbCell>
            <LayerName>{l.name}</LayerName>
            {l.locked && <LockMark><Icon n="lock" s={14} /></LockMark>}
          </LayerItem>
        ))}
      </LayerList>
      <Track $gap={4}><Chevron dir="up" /><Spacer /><Thumb $size={46} /><Chevron /></Track>
    </Scroller>
    <FootBar>
      <FootButton $off aria-label="Link layers"><Icon n="chain" s={18} /></FootButton>
      <FootButton aria-label="Layer effects"><Fx>fx</Fx><MoreMark /></FootButton>
      <FootButton aria-label="Add mask"><Icon n="maskAdd" s={16} /></FootButton>
      <FootButton aria-label="New adjustment layer"><Icon n="adjust" s={16} /><MoreMark /></FootButton>
      <FootButton aria-label="New group"><Icon n="folder" s={16} /></FootButton>
      <FootButton aria-label="New layer"><Icon n="add" s={16} /></FootButton>
      <FootButton aria-label="Delete layer"><Icon n="trash" s={16} /></FootButton>
    </FootBar>
  </Panel>
);

/* ---------- app ---------- */

const menus = ["File", "Edit", "Image", "Layer", "Type", "Select", "Filter", "3D", "View", "Plugins", "Window", "Help"];

export default function App() {
  return (
    <Shell>
      <Global />
      <MenuBar>
        <Logo>Ps</Logo>
        <Menu>{menus.map((m) => <button key={m}>{m}</button>)}</Menu>
        <WindowButtons>
          <WindowButton $w={35} aria-label="Minimize"><svg width="13" height="4"><path d="M0 0h13v4H0z" fill="currentColor" /></svg></WindowButton>
          <WindowButton $w={34} aria-label="Maximize"><svg width="13" height="10"><path d="M1.500 1.500h10v7h-10z" fill="none" stroke="currentColor" strokeWidth="3" /></svg></WindowButton>
          <WindowButton $w={58} aria-label="Close"><svg width="13" height="11"><path d="M1 1l11 9M12 1L1 10" stroke="currentColor" strokeWidth="2.500" /></svg></WindowButton>
        </WindowButtons>
      </MenuBar>
      <OptionsBar>
        <Grip $tall />
        <Group $pad="0 14px 0 11px"><IconButton aria-label="Home"><Icon n="home" s={21} /></IconButton></Group>
        <Group $pad="0 9px 0 5px"><IconButton aria-label="Move tool"><Icon n="move" s={20} /></IconButton><IconButton $w={16} aria-label="Tool presets"><Chevron /></IconButton></Group>
        <Group $gap={18} $pad="0 12px 0 10px">
          <Check><input type="checkbox" defaultChecked />Auto-Select:</Check>
          <Picker $w={67}><select aria-label="Auto-select target"><option>Layer</option></select><Chevron /></Picker>
        </Group>
        <Group $pad="0 20px 0 11px"><Check><input type="checkbox" defaultChecked />Show Transform Controls</Check></Group>
        <Group $pad="0 0 0 10px">
          {["alignL", "alignC", "alignR"].map((n) => <IconButton key={n} $off aria-label={n}><Icon n={n} /></IconButton>)}
          <IconButton $w={52} $off aria-label="Distribute vertically"><Icon n="distV" s={20} /></IconButton>
        </Group>
        <Group $pad="0 0 0 10px">
          {["alignT", "alignM", "alignB"].map((n) => <IconButton key={n} $off aria-label={n}><Icon n={n} /></IconButton>)}
          <IconButton $w={54} $off aria-label="Distribute horizontally"><Icon n="distH" /></IconButton>
        </Group>
        <Group $pad="0 11px"><IconButton aria-label="More"><Icon n="dots" s={20} /></IconButton></Group>
        <Group $line={false} $pad="0 0 0 10px">
          <Hint>3D Mode:</Hint>
          <IconSet $gap={0} $left={16}>
            {["orbit", "roll", "pan", "slide", "camera"].map((n) => <IconButton key={n} $off aria-label={n}><Icon n={n} s={21} /></IconButton>)}
          </IconSet>
        </Group>
        <Spacer />
        <Share>Share</Share>
        <IconButton $w={23} aria-label="Search"><Icon n="search" s={20} /></IconButton>
        <IconButton $w={48} aria-label="Workspace"><Icon n="workspace" s={22} /></IconButton>
        <IconButton $w={10} aria-label="Workspace menu"><Chevron /></IconButton>
      </OptionsBar>
      <Body>
        <Tools />
        <Editor />
        <Dock>
          <Strip $end><DoubleChevron flip /><DoubleChevron /></Strip>
          <DockBody>
            <IconDock>
              <IconDockGroup>
                <GripRow $h={12}><Grip /></GripRow>
                <button aria-label="History"><Icon n="actions" s={22} /></button>
                <button aria-label="Comments"><Icon n="comment" s={21} /></button>
              </IconDockGroup>
              <IconDockGroup>
                <GripRow $h={12}><Grip /></GripRow>
                <button aria-label="Brush settings"><Icon n="brushList" s={26} /></button>
                <button aria-label="Brushes"><Icon n="brushes" s={26} /></button>
              </IconDockGroup>
            </IconDock>
            <Panels>
              <ColorPanel />
              <PropertiesPanel />
              <LayersPanel />
            </Panels>
          </DockBody>
        </Dock>
      </Body>
    </Shell>
  );
}
